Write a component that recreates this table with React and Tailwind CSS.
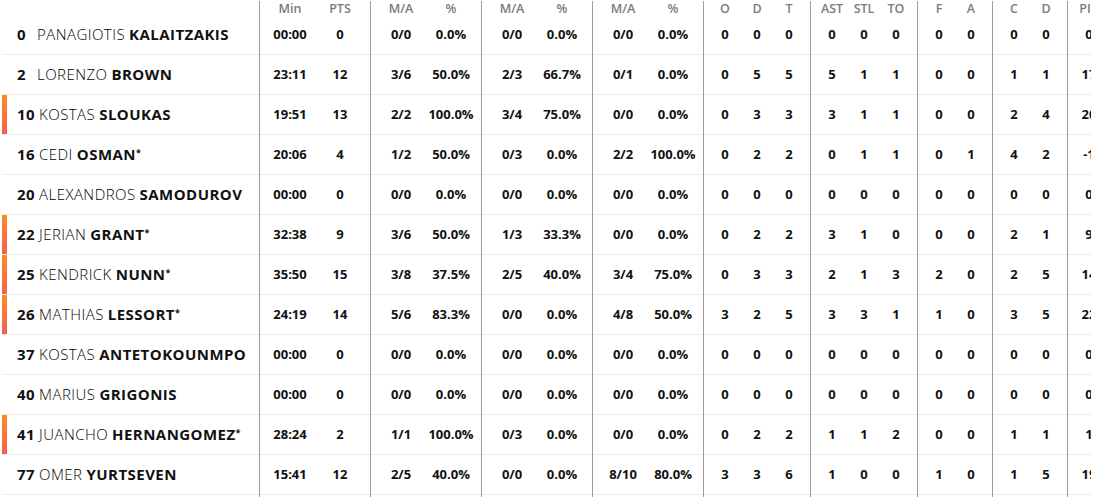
import React from "react";

const rows = [
  { n: 0, f: "PANAGIOTIS", l: "KALAITZAKIS", s: false, b: false, v: ["00:00","0","0/0","0.0%","0/0","0.0%","0/0","0.0%","0","0","0","0","0","0","0","0","0","0","0"] },
  { n: 2, f: "LORENZO", l: "BROWN", s: false, b: false, v: ["23:11","12","3/6","50.0%","2/3","66.7%","0/1","0.0%","0","5","5","5","1","1","0","0","1","1","17"] },
  { n: 10, f: "KOSTAS", l: "SLOUKAS", s: false, b: true, v: ["19:51","13","2/2","100.0%","3/4","75.0%","0/0","0.0%","0","3","3","3","1","1","0","0","2","4","20"] },
  { n: 16, f: "CEDI", l: "OSMAN", s: true, b: false, v: ["20:06","4","1/2","50.0%","0/3","0.0%","2/2","100.0%","0","2","2","0","1","1","0","1","4","2","-1"] },
  { n: 20, f: "ALEXANDROS", l: "SAMODUROV", s: false, b: false, v: ["00:00","0","0/0","0.0%","0/0","0.0%","0/0","0.0%","0","0","0","0","0","0","0","0","0","0","0"] },
  { n: 22, f: "JERIAN", l: "GRANT", s: true, b: true, v: ["32:38","9","3/6","50.0%","1/3","33.3%","0/0","0.0%","0","2","2","3","1","0","0","0","2","1","9"] },
  { n: 25, f: "KENDRICK", l: "NUNN", s: true, b: true, v: ["35:50","15","3/8","37.5%","2/5","40.0%","3/4","75.0%","0","3","3","2","1","3","2","0","2","5","14"] },
  { n: 26, f: "MATHIAS", l: "LESSORT", s: true, b: true, v: ["24:19","14","5/6","83.3%","0/0","0.0%","4/8","50.0%","3","2","5","3","3","1","1","0","3","5","22"] },
  { n: 37, f: "KOSTAS", l: "ANTETOKOUNMPO", s: false, b: false, v: ["00:00","0","0/0","0.0%","0/0","0.0%","0/0","0.0%","0","0","0","0","0","0","0","0","0","0","0"] },
  { n: 40, f: "MARIUS", l: "GRIGONIS", s: false, b: false, v: ["00:00","0","0/0","0.0%","0/0","0.0%","0/0","0.0%","0","0","0","0","0","0","0","0","0","0","0"] },
  { n: 41, f: "JUANCHO", l: "HERNANGOMEZ", s: true, b: true, v: ["28:24","2","1/1","100.0%","0/3","0.0%","0/0","0.0%","0","2","2","1","1","2","0","0","1","1","1"] },
  { n: 77, f: "OMER", l: "YURTSEVEN", s: false, b: false, v: ["15:41","12","2/5","40.0%","0/0","0.0%","8/10","80.0%","3","3","6","1","0","0","1","0","1","5","19"] },
];

const headers = ["Min","PTS","M/A","%","M/A","%","M/A","%","O","D","T","AST","STL","TO","F","A","C","D","PIR"];

const groups = [
  [2, "w-[50px]"],
  [2, "w-[50px]"],
  [2, "w-[50px]"],
  [2, "w-[50px]"],
  [3, "w-[32px]"],
  [3, "w-[32px]"],
  [2, "w-[32px]"],
  [2, "w-[32px]"],
  [1, "w-[32px]"],
];

function Groups({ values, header }) {
  let idx = 0;
  return groups.map(([count, w], gi) => {
    const cells = [];
    for (let i = 0; i < count; i++) {
      const val = values[idx++];
      cells.push(
        <div key={i} className={`${w} shrink-0 flex items-center justify-center whitespace-nowrap`}>
          {val}
        </div>
      );
    }
    return (
      <div
        key={gi}
        className={`flex shrink-0 border-l border-[#9c9c9c] px-[5px] ${header ? "" : "-mb-px"}`}
      >
        {cells}
      </div>
    );
  });
}

export default function App() {
  return (
    <div
      className="w-[1119px] h-[497px] bg-white overflow-hidden text-[#111]"
      style={{ fontFamily: '"Open Sans", "Liberation Sans", sans-serif' }}
    >
      <div className="w-[1091px] overflow-hidden pl-[2px]">
        <div className="flex h-[15px] text-[12.5px] font-semibold text-[#7b7b7b] leading-[15px] pt-px">
          <div className="w-[257px] shrink-0" />
          <Groups values={headers} header />
        </div>
        {rows.map((r) => (
          <div key={r.n} className="flex h-[40px] border-b border-[#ececec]">
            <div
              className={`w-[5px] shrink-0 ${r.b ? "bg-gradient-to-b from-[#ff8c1c] to-[#f0604f]" : ""}`}
            />
            <div className="w-[252px] shrink-0 flex items-center pl-[10px] text-[15px] whitespace-nowrap tracking-[0.45px]">
              <span className="font-bold inline-block min-w-[16px]">{r.n}</span>
              <span className="ml-[4px] font-light text-black">{r.f}</span>
              <span className="font-bold ml-[4px]">{r.l}</span>
              {r.s && <span className="font-bold text-[9px] self-start mt-[11px]">*</span>}
            </div>
            <div className="flex text-[13px] font-bold">
              <Groups values={r.v} />
            </div>
          </div>
        ))}
        <div className="flex h-[40px] border-b border-[#ececec]">
          <div className="w-[257px] shrink-0" />
          <div className="flex">
            <Groups values={Array(19).fill("")} />
          </div>
        </div>
      </div>
    </div>
  );
}
